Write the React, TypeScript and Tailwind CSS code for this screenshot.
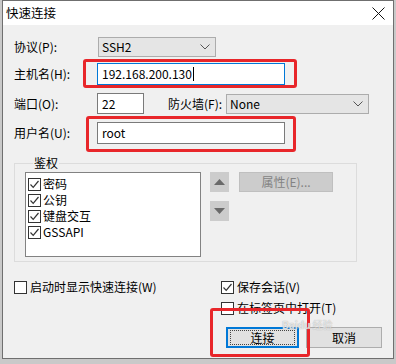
import React from 'react';

const font = { fontFamily: '"Noto Sans CJK SC", "Noto Sans", sans-serif' };

const Chevron = () => (
  <svg width="10" height="6" viewBox="0 0 10 6" className="shrink-0">
    <path d="M0.5 0.5 L5 5 L9.5 0.5" fill="none" stroke="#555" strokeWidth="1" />
  </svg>
);

const Check: React.FC<{ checked?: boolean }> = ({ checked }) => (
  <span className="flex h-[13px] w-[13px] shrink-0 items-center justify-center border border-[#333] bg-white">
    {checked && (
      <svg width="11" height="11" viewBox="0 0 11 11">
        <path d="M1.5 5.5 L4.2 8.3 L9.5 2" fill="none" stroke="#333" strokeWidth="1.2" />
      </svg>
    )}
  </span>
);

const Combo: React.FC<{ value: string; width: string }> = ({ value, width }) => (
  <div className={`flex h-[20px] ${width} items-center justify-between border border-[#acacac] bg-[#e5e5e5] pl-[3px] pr-[5px]`}>
    <span>{value}</span>
    <Chevron />
  </div>
);

const RedBox: React.FC<{ className: string }> = ({ className }) => (
  <div className={`pointer-events-none absolute rounded-[3px] border-[3px] border-[#e8262a] ${className}`} />
);

const items = ['密码', '公钥', '键盘交互', 'GSSAPI'];

export default function App() {
  return (
    <div className="relative h-[364px] w-[396px] bg-[#c9c9c9] pl-[2px] text-[12px] leading-[16px] text-black" style={font}>
      <div className="flex h-[359px] w-[392px] flex-col border border-[#6f6f6f] bg-[#f0f0f0]">
        <div className="flex h-[24px] shrink-0 items-center justify-between bg-white pl-[3px] pr-[8px]">
          <span className="text-[12.5px]">快速连接</span>
          <svg width="13" height="13" viewBox="0 0 13 13">
            <path d="M0.5 0.5 L12.5 12.5 M12.5 0.5 L0.5 12.5" stroke="#111" strokeWidth="1" />
          </svg>
        </div>

        <div className="flex flex-col pl-[11px]">
          <div className="mt-[12px] flex h-[20px] items-center">
            <span className="w-[84px]">协议(P):</span>
            <Combo value="SSH2" width="w-[118px]" />
          </div>

          <div className="mt-[6px] flex h-[22px] items-center">
            <span className="w-[83px]">主机名(H):</span>
            <div className="flex h-[22px] w-[188px] items-center border border-[#0078d7] bg-white pl-[4px]">
              <span>192.168.200.130</span>
              <span className="ml-[1px] h-[14px] w-px bg-black" />
            </div>
          </div>

          <div className="mt-[8px] flex h-[21px] items-center">
            <span className="w-[83px]">端口(O):</span>
            <div className="flex h-[21px] w-[47px] items-center border border-[#7a7a7a] bg-white pl-[4px]">22</div>
            <span className="ml-[24px] w-[58px]">防火墙(F):</span>
            <Combo value="None" width="w-[143px]" />
          </div>

          <div className="mt-[8px] flex h-[22px] items-center">
            <span className="w-[83px]">用户名(U):</span>
            <div className="flex h-[22px] w-[188px] items-center border border-[#7a7a7a] bg-white pl-[4px]">root</div>
          </div>

          <fieldset className="mt-[11px] w-[343px] border border-[#dcdcdc] pb-[4px] pl-[10px]">
            <legend className="ml-[8px] px-[1px] leading-[16px]">鉴权</legend>
            <div className="mt-[1px] flex items-start">
              <div className="flex h-[85px] w-[176px] flex-col border border-[#828282] bg-white pl-[2px] pt-[3px]">
                {items.map((it) => (
                  <div key={it} className="flex h-[16px] items-center gap-[2px]">
                    <Check checked />
                    <span>{it}</span>
                  </div>
                ))}
              </div>
              <div className="ml-[9px] flex flex-col">
                <div className="flex h-[20px] w-[19px] items-center justify-center bg-[#cccccc]">
                  <svg width="11" height="6" viewBox="0 0 11 6"><path d="M0 6 L5.5 0 L11 6 Z" fill="#6a6a6a" /></svg>
                </div>
                <div className="mt-[9px] flex h-[20px] w-[19px] items-center justify-center bg-[#cccccc]">
                  <svg width="11" height="6" viewBox="0 0 11 6"><path d="M0 0 L11 0 L5.5 6 Z" fill="#6a6a6a" /></svg>
                </div>
              </div>
              <div className="ml-[10px] flex h-[20px] w-[94px] items-center justify-center border border-[#bfbfbf] bg-[#cccccc] text-[#838383]">
                属性(E)...
              </div>
            </div>
          </fieldset>

          <div className="mt-[17px] flex h-[16px] items-center">
            <div className="flex w-[207px] items-center gap-[3px]">
              <Check />
              <span>启动时显示快速连接(W)</span>
            </div>
            <div className="flex items-center gap-[3px]">
              <Check checked />
              <span>保存会话(V)</span>
            </div>
          </div>

          <div className="mt-[5px] flex h-[16px] items-center pl-[207px]">
            <div className="flex items-center gap-[3px]">
              <Check />
              <span>在标签页中打开(T)</span>
            </div>
          </div>

          <div className="mt-[11px] flex pl-[212px]">
            <div className="flex h-[21px] w-[73px] items-center justify-center border-2 border-[#0078d7] bg-[#e1e1e1]">
              <span className="flex h-[15px] w-[65px] items-center justify-center border border-dotted border-[#444]">连接</span>
            </div>
            <div className="ml-[7px] flex h-[21px] w-[76px] items-center justify-center border border-[#adadad] bg-[#e1e1e1]">
              取消
            </div>
          </div>
        </div>
      </div>

      <RedBox className="left-[83px] top-[59px] h-[29px] w-[214px]" />
      <RedBox className="left-[86px] top-[116px] h-[36px] w-[210px]" />
      <RedBox className="left-[210px] top-[308px] h-[49px] w-[100px]" />

      <div
        className="pointer-events-none absolute left-[282px] top-[319px] flex h-[11px] items-center gap-[2px] text-[10px] font-bold leading-[11px] text-white/70"
        style={{ textShadow: '0 0 1px #999' }}
      >
        <span>Baidu</span>
        <span className="font-normal">经验</span>
      </div>
    </div>
  );
}
